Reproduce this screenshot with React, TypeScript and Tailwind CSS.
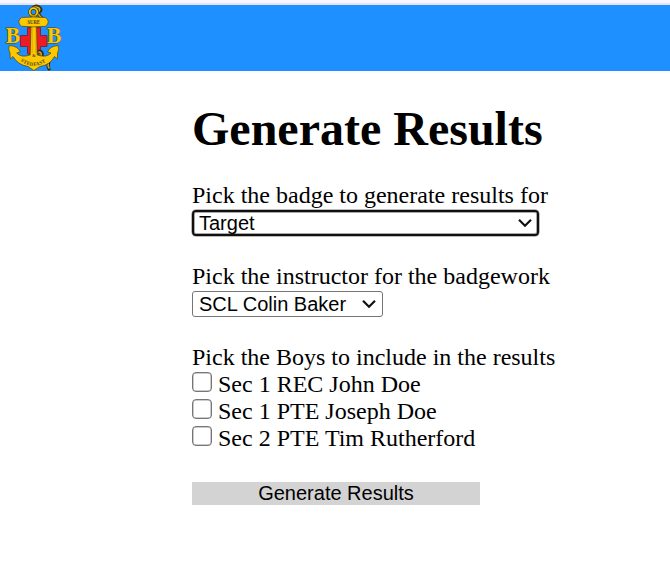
import React from "react";

function Crest() {
  return (
    <svg width="58" height="67" viewBox="5 4 58 67" className="-mt-px ml-[5px] block shrink-0" aria-label="Boys' Brigade crest">
      <path d="M27.5 27.5H40.5V35.5H47V46.5H40.5V54H27.5V46.5H20.5V35.5H27.5Z" fill="#ed1c24" stroke="#6b2226" strokeWidth="0.8" />
      <g fill="none" strokeLinecap="round">
        <path d="M33 8Q35 5 39 7Q43 10 39 12Q38 15 42 18M39 51Q43 51 42 56Q41 60 46 60Q50 62 48 66L49 69" stroke="#30301a" strokeWidth="3.2" />
        <path d="M33 8Q35 6 39 8Q41 10 38 12Q38 15 42 18M39 52Q42 52 41 56Q41 60 46 61Q49 63 48 66L49 68" stroke="#e0ad12" strokeWidth="1.5" strokeDasharray="2 0.8" />
        <circle cx="33.5" cy="12" r="3.8" stroke="#40390f" strokeWidth="3.2" />
        <circle cx="33.5" cy="12" r="3.8" stroke="#fdc800" strokeWidth="1.8" />
      </g>
      <g fill="#fdc800" stroke="#4c430f" strokeWidth="0.7" strokeLinejoin="round">
        <path d="M31.2 16H36.3L37.2 55Q47 58 51 53L47.5 52Q50 46 58.2 45.5Q59.5 50 57.5 53L57.3 59L54.5 56.5Q50 65 40 66.5L33.8 70.5L28 66.5Q18 65 13 56.5L10.2 59L10 53Q8 50 9.2 45.5Q18 46 20.3 52L16.7 53Q21 58 30.2 55Z" />
        <path d="M21.5 17.5Q34 16.5 45.5 17.5Q51 22 45.5 26.3Q34 27.4 21.5 26.3Q16 22 21.5 17.5Z" />
      </g>
      <path d="M32.2 27V53M35.8 27V53" stroke="#9f8415" strokeWidth="0.4" />
      <g fontFamily="Liberation Serif, serif" fontWeight="bold" textAnchor="middle">
        <text x="33.7" y="24" fontSize="5.6" textLength="12.5" lengthAdjust="spacingAndGlyphs" fill="#51460f">SURE</text>
        <text x="13" y="43.3" fontSize="24" textLength="14.4" lengthAdjust="spacingAndGlyphs" fill="#fdc800" stroke="#4c430f" strokeWidth="1" paintOrder="stroke">B</text>
        <text x="54.3" y="43.3" fontSize="24" textLength="14.4" lengthAdjust="spacingAndGlyphs" fill="#fdc800" stroke="#4c430f" strokeWidth="1" paintOrder="stroke">B</text>
        <text x="33.8" y="57.3" fontSize="4.5" fill="#51460f">&amp;</text>
      </g>
      <path id="motto" d="M20.5 61Q33.5 70.5 47 61" fill="none" />
      <text fontFamily="Liberation Serif, serif" fontWeight="bold" fontSize="5" fill="#51460f">
        <textPath href="#motto" textLength="27">STEDFAST</textPath>
      </text>
    </svg>
  );
}

function Chevron() {
  return (
    <svg width="14" height="10" viewBox="0 0 14 10" fill="none" aria-hidden="true">
      <path d="M1 1.8L7 7.8L13 1.8" stroke="#111" strokeWidth="2.2" />
    </svg>
  );
}

const boys = ["Sec 1 REC John Doe", "Sec 1 PTE Joseph Doe", "Sec 2 PTE Tim Rutherford"];

export default function App() {
  return (
    <div className="h-[586px] w-full overflow-hidden bg-white font-['Liberation_Serif',serif] text-[24px] leading-[27px] text-black">
      <div className="h-[5px] border-b-2 border-[#e8e2ee] bg-[#f9f5ff]" />
      <header className="flex h-[66px] items-start bg-[#1e90ff]">
        <Crest />
      </header>
      <main className="ml-[192px] pt-[31px]">
        <h1 className="h-[54px] text-[48px] leading-[54px] font-bold whitespace-nowrap">Generate Results</h1>
        <div className="mt-[26px] h-[27px]">Pick the badge to generate results for</div>
        <button className="mt-px flex h-[26px] w-[347px] items-center justify-between rounded-[4px] border-2 border-[#101010] pr-[5px] pl-[5px] font-['Liberation_Sans',sans-serif] text-[20px] leading-[22px] shadow-[0_0_0_0.5px_#777,inset_0_0_0_1px_#aaa]">
          <span>Target</span><Chevron />
        </button>
        <div className="mt-[27px] h-[27px]">Pick the instructor for the badgework</div>
        <button className="mt-px flex h-[26px] w-[191px] items-center justify-between rounded-[3px] border border-[#767676] pr-[6px] pl-[6px] font-['Liberation_Sans',sans-serif] text-[20px] leading-[22px]">
          <span className="whitespace-nowrap">SCL Colin Baker</span><Chevron />
        </button>
        <div className="mt-[27px] h-[27px]">Pick the Boys to include in the results</div>
        {boys.map((boy) => (
          <label key={boy} className="flex h-[27px] items-start">
            <input type="checkbox" className="mt-px mr-[6px] size-[20px] appearance-none rounded-[4px] border-[1.5px] border-[#767676] bg-white shadow-[inset_0_0_0_0.5px_#999]" />
            <span>{boy}</span>
          </label>
        ))}
        <button className="mt-[30px] block h-[23px] w-[288px] bg-[#d3d3d3] text-center font-['Liberation_Sans',sans-serif] text-[20px] leading-[23px]">Generate Results</button>
      </main>
    </div>
  );
}
